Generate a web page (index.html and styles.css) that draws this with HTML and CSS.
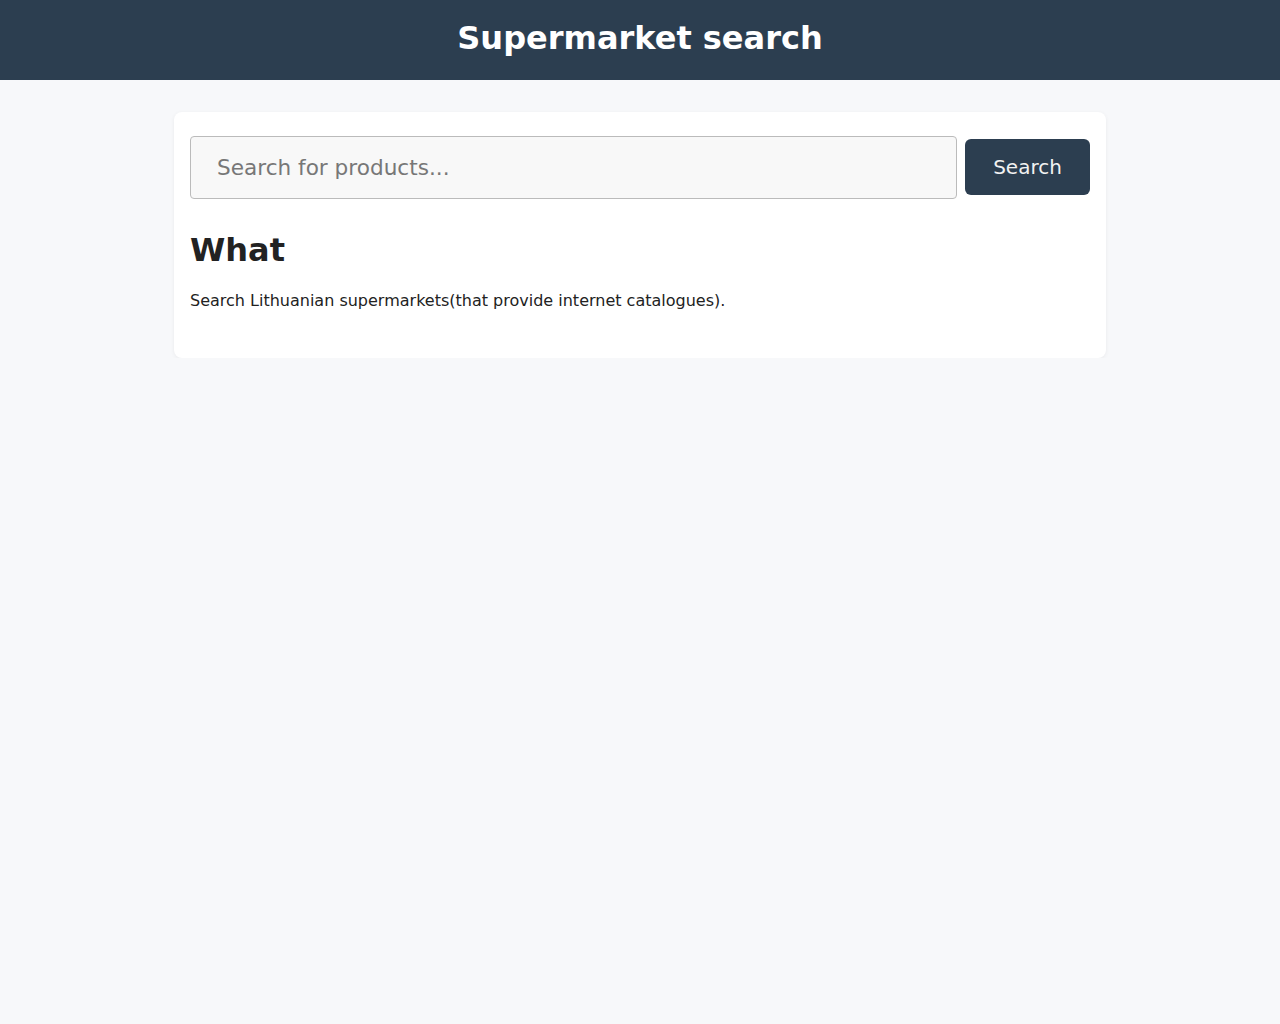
FILE: index.html
```html
<!DOCTYPE html>
<html>
<head>
<meta charset="utf-8">
<title>Supermarket search</title>
<link rel="stylesheet" href="styles.css">
</head>
<body>
<header class="topbar">
  <h1 class="title">Supermarket search</h1>
</header>
<main class="card">
  <form class="search-form">
    <input class="search-input" type="text" placeholder="Search for products...">
    <button class="search-btn" type="button">Search</button>
  </form>
  <h2 class="heading">What</h2>
  <p class="text">Search Lithuanian supermarkets(that provide internet catalogues).</p>
</main>
</body>
</html>
```
FILE: styles.css
```css
html, body {
  margin: 0;
  padding: 0;
}
body {
  background: #f7f8fa;
  font-family: "DejaVu Sans", sans-serif;
  color: #222;
}
.topbar {
  background: #2c3e50;
  height: 80px;
  box-sizing: border-box;
  padding-bottom: 4px;
  display: flex;
  align-items: center;
  justify-content: center;
}
.title {
  margin: 0;
  color: #fff;
  font-size: 32px;
  font-weight: bold;
}
.card {
  width: 900px;
  margin: 32px auto 0;
  background: #fff;
  border-radius: 8px;
  padding: 24px 16px 24px;
  box-shadow: 0 1px 4px rgba(0, 0, 0, 0.06);
}
.search-form {
  display: flex;
  align-items: flex-start;
  gap: 8px;
}
.search-input {
  flex: 1;
  height: 63px;
  box-sizing: border-box;
  padding: 0 26px;
  font-family: "DejaVu Sans", sans-serif;
  font-size: 21.6px;
  color: #333;
  background: #f8f8f8;
  border: 1px solid #bbb;
  border-radius: 4px;
  outline: none;
}
.search-input::placeholder {
  color: #777;
}
.search-btn {
  margin-top: 3px;
  width: 125px;
  height: 56px;
  border: none;
  border-radius: 6px;
  background: #2c3e50;
  color: #f2f2f2;
  font-family: "DejaVu Sans", sans-serif;
  font-size: 20px;
  cursor: pointer;
}
.heading {
  margin: 32px 0 22px;
  font-size: 32px;
  font-weight: bold;
  color: #222;
}
.text {
  margin: 0 0 24px;
  font-size: 16px;
  color: #222;
}
```
